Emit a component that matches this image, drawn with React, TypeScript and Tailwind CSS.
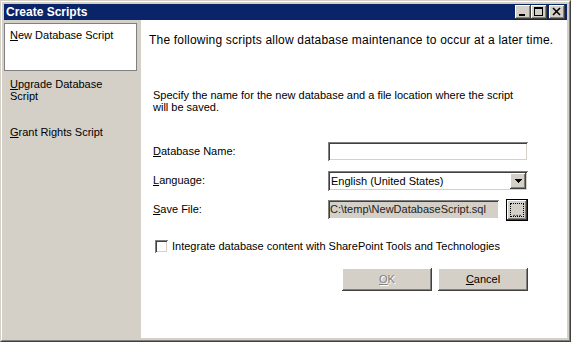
import React from "react";

const raised =
  "shadow-[inset_-1px_-1px_0_#404040,inset_1px_1px_0_#ffffff,inset_-2px_-2px_0_#808080,inset_2px_2px_0_#d4d0c8]";
const sunken =
  "shadow-[inset_1px_1px_0_#808080,inset_-1px_-1px_0_#ffffff,inset_2px_2px_0_#404040,inset_-2px_-2px_0_#d4d0c8]";

function U({ children }: { children: React.ReactNode }) {
  return <span className="underline underline-offset-[1px]">{children}</span>;
}

function CaptionButton({ kind }: { kind: "min" | "max" | "close" }) {
  return (
    <div className={`w-[16px] h-[14px] bg-[#d4d0c8] ${raised} flex items-center justify-center`}>
      <svg width="16" height="14" viewBox="0 0 16 14" shapeRendering="crispEdges">
        {kind === "min" && <rect x="4" y="9" width="6" height="2" fill="#000" />}
        {kind === "max" && (
          <g fill="none" stroke="#000">
            <rect x="3.5" y="2.5" width="8" height="8" />
            <line x1="3" y1="3.5" x2="12" y2="3.5" />
          </g>
        )}
        {kind === "close" && (
          <g stroke="#000" strokeWidth="1.6" shapeRendering="auto">
            <line x1="4" y1="3" x2="11" y2="10" />
            <line x1="11" y1="3" x2="4" y2="10" />
          </g>
        )}
      </svg>
    </div>
  );
}

export default function App() {
  return (
    <div className="w-[571px] h-[342px] bg-[#d4d0c8] border border-t-[#d4d0c8] border-l-[#d4d0c8] border-r-[#404040] border-b-[#404040] font-['Liberation_Sans',Arial,sans-serif] text-[11px] text-black">
      <div className="h-full border border-t-white border-l-white border-r-[#808080] border-b-[#808080] p-[2px] flex flex-col">
        {/* Title bar */}
        <div className="h-[16px] shrink-0 bg-[#0a246a] flex items-center pl-[2px] pr-[2px]">
          <span className="flex-1 font-bold text-white text-[12px] leading-[16px]">Create Scripts</span>
          <CaptionButton kind="min" />
          <CaptionButton kind="max" />
          <div className="w-[2px]" />
          <CaptionButton kind="close" />
        </div>

        <div className="flex flex-1 min-h-0">
          {/* Left navigation */}
          <div className="w-[137px] shrink-0 bg-[#d4d0c8] pt-[3px] pr-[4px] leading-[12px]">
            <div className="h-[48px] bg-white border border-[#808080] pl-[5px] pt-[5px]">
              <U>N</U>ew Database Script
            </div>
            <div className="h-[48px] pl-[6px] pt-[7px]">
              <U>U</U>pgrade Database
              <br />
              Script
            </div>
            <div className="h-[48px] pl-[6px] pt-[7px]">
              <U>G</U>rant Rights Script
            </div>
          </div>

          {/* Right content */}
          <div className="flex-1 bg-white flex flex-col">
            <div className="pt-[13px] pl-[8px] text-[12px] leading-[15px] tracking-[0.2px]">
              The following scripts allow database maintenance to occur at a later time.
            </div>
            <div className="mt-[41px] pl-[12px] leading-[12px]">
              Specify the name for the new database and a file location where the script
              <br />
              will be saved.
            </div>

            <div className="mt-[24px] pl-[12px]">
              <div className="h-[29px] flex items-center">
                <div className="w-[175px]">
                  <U>D</U>atabase Name:
                </div>
                <div className={`w-[200px] h-[19px] bg-white ${sunken}`} />
              </div>
              <div className="h-[29px] flex items-center">
                <div className="w-[175px]">
                  <U>L</U>anguage:
                </div>
                <div className={`w-[200px] h-[20px] bg-white ${sunken} flex items-center p-[2px]`}>
                  <span className="flex-1 pl-[1px] leading-[16px]">English (United States)</span>
                  <div className={`w-[16px] h-[16px] bg-[#d4d0c8] ${raised} flex items-center justify-center`}>
                    <svg width="7" height="4" viewBox="0 0 7 4" shapeRendering="crispEdges">
                      <path d="M0 0h7v1H0zM1 1h5v1H1zM2 2h3v1H2zM3 3h1v1H3z" fill="#000" />
                    </svg>
                  </div>
                </div>
              </div>
              <div className="h-[29px] flex items-center">
                <div className="w-[175px]">
                  <U>S</U>ave File:
                </div>
                <div className={`w-[171px] h-[19px] bg-[#d4d0c8] ${sunken} flex items-center pl-[2px]`}>
                  <span className="leading-[15px] text-[#222]">{"C:\\temp\\NewDatabaseScript.sql"}</span>
                </div>
                <div className="ml-[7px] w-[22px] h-[22px] border border-black bg-[#d4d0c8]">
                  <div className={`w-full h-full ${raised} p-[3px]`}>
                    <div className="w-full h-full border border-dotted border-black flex items-end justify-center leading-[8px] text-[11px]">
                      ...
                    </div>
                  </div>
                </div>
              </div>
            </div>

            <div className="mt-[16px] pl-[14px] flex items-center h-[13px]">
              <div className={`w-[13px] h-[13px] bg-white ${sunken}`} />
              <span className="ml-[4px] leading-[13px]">
                Integrate database content with SharePoint Tools and Technologies
              </span>
            </div>

            <div className="mt-[15px] pr-[39px] flex justify-end gap-[6px]">
              <div className={`w-[90px] h-[23px] bg-[#d4d0c8] ${raised} flex items-center justify-center text-[#808080] [text-shadow:1px_1px_0_#ffffff]`}>
                <U>O</U>K
              </div>
              <div className={`w-[90px] h-[23px] bg-[#d4d0c8] ${raised} flex items-center justify-center`}>
                <U>C</U>ancel
              </div>
            </div>
          </div>
        </div>
      </div>
    </div>
  );
}
